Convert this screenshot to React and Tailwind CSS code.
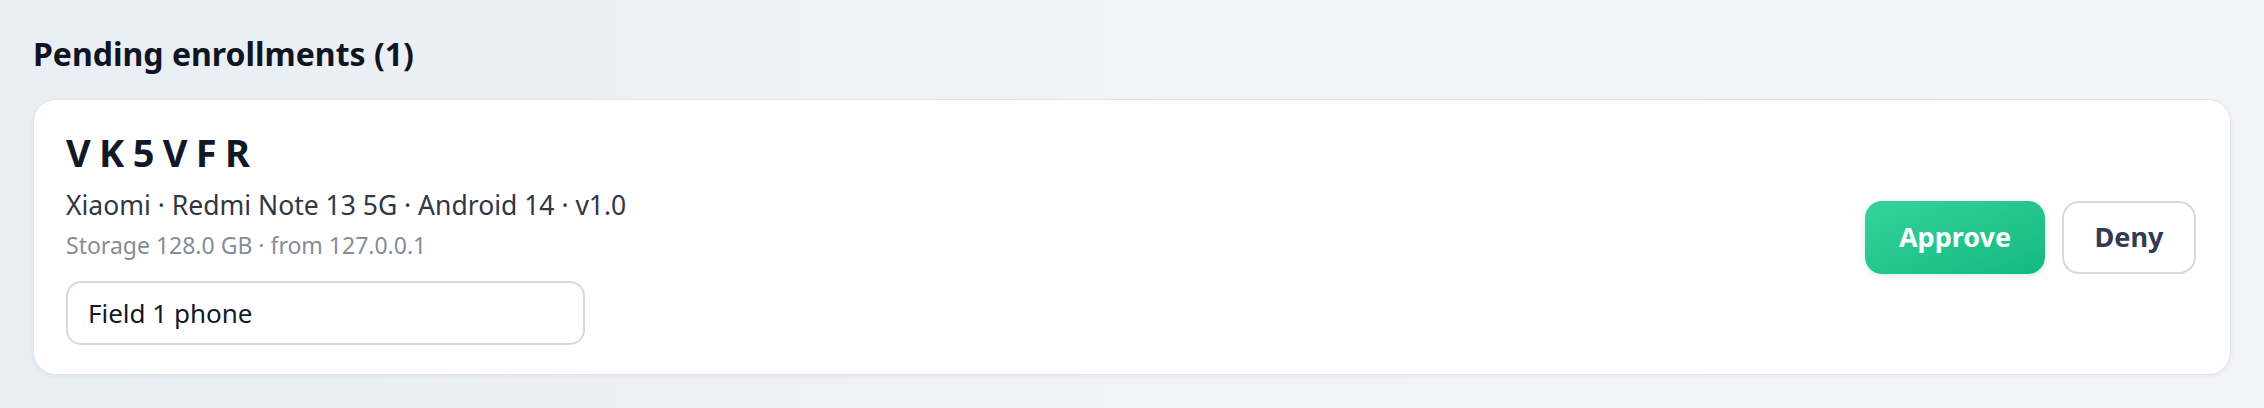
export default function App() {
  const font = { fontFamily: '"Noto Sans", "Open Sans", sans-serif' };

  return (
    <div
      className="w-full h-[408px] bg-gradient-to-r from-[#e8eef4] via-[#f1f3f7] to-[#f3f4f8] px-[33px] pt-[34px]"
      style={font}
    >
      {/* ── Section header ───────────────────── */}
      <h2 className="text-[32px] leading-[40px] font-bold text-[#0f1523]">
        Pending enrollments (1)
      </h2>

      {/* ── Enrollment card ──────────────────── */}
      <div className="mt-[25px] bg-white rounded-[23px] border border-[#e1e5ee] shadow-[0_2px_4px_rgba(30,41,59,0.05)] pl-[32px] pr-[34px] pt-[29px] pb-[29px] flex items-center justify-between">
        <div className="flex flex-col">
          <div className="text-[38px] leading-[46px] font-bold tracking-[0.22em] text-[#111827]">
            VK5VFR
          </div>
          <div className="mt-[13px] text-[26.5px] leading-[34px] text-[#2f3646]">
            Xiaomi · Redmi Note 13 5G · Android 14 · v1.0
          </div>
          <div className="mt-[9px] text-[23px] leading-[29px] text-[#868c99]">
            Storage 128.0 GB · from 127.0.0.1
          </div>
          <input
            defaultValue="Field 1 phone"
            className="mt-[21px] w-[519px] h-[64px] rounded-[15px] border-2 border-[#d5d9e4] bg-white px-[20px] text-[26px] text-[#111827] outline-none"
            style={font}
          />
        </div>

        <div className="flex items-center gap-[17px]">
          <button className="w-[180px] h-[73px] rounded-[17px] bg-gradient-to-br from-[#34d399] to-[#10b981] text-white text-[27px] font-bold shadow-[0_2px_6px_rgba(16,185,129,0.18)]">
            Approve
          </button>
          <button className="w-[134px] h-[73px] rounded-[17px] border-2 border-[#d5d9e4] bg-white text-[#353b4f] text-[27px] font-bold">
            Deny
          </button>
        </div>
      </div>
    </div>
  );
}
